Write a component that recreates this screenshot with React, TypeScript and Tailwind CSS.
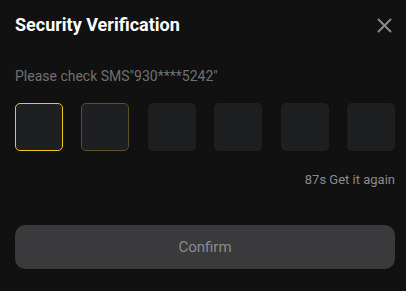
const cells = [0, 1, 2, 3, 4, 5];

export default function App() {
  return (
    <div
      className="w-[406px] h-[291px] bg-[#111111] pl-[15px] pr-[11px] pt-[13px]"
      style={{ fontFamily: 'Roboto, "Noto Sans", sans-serif' }}
    >
      {/* header */}
      <div className="flex items-center justify-between h-[24px]">
        <h1 className="text-[18px] font-bold text-white leading-[24px]">
          Security Verification
        </h1>
        <button className="mr-[3px] mt-[1px] text-[#8a8a8a]">
          <svg width="15" height="15" viewBox="0 0 15 15" fill="none">
            <path d="M1.5 1.5 L13.5 13.5 M13.5 1.5 L1.5 13.5" stroke="currentColor" strokeWidth="2" strokeLinecap="round" />
          </svg>
        </button>
      </div>

      <p className="mt-[30px] text-[14px] leading-[18px] text-[#707070]">
        Please check SMS"930****5242"
      </p>

      {/* code inputs */}
      <div className="mt-[18px] flex justify-between">
        {cells.map((i) => (
          <div
            key={i}
            className={
              i === 0
                ? 'w-[48px] h-[48px] rounded-[5px] bg-[#1e1f21] border border-[#f0c419]'
                : i === 1
                  ? 'w-[48px] h-[48px] rounded-[5px] bg-[#1e1f21] border border-[#5c5024]'
                  : 'w-[48px] h-[48px] rounded-[5px] bg-[#1e1f21]'
            }
          />
        ))}
      </div>

      <div className="mt-[20px] flex justify-end text-[13px] leading-[18px] text-[#8a8a8a]">
        87s Get it again
      </div>

      <button className="mt-[36px] w-full h-[44px] rounded-[10px] bg-[#3a3a3c] text-[15px] text-[#8a8a8a]">
        Confirm
      </button>
    </div>
  );
}
